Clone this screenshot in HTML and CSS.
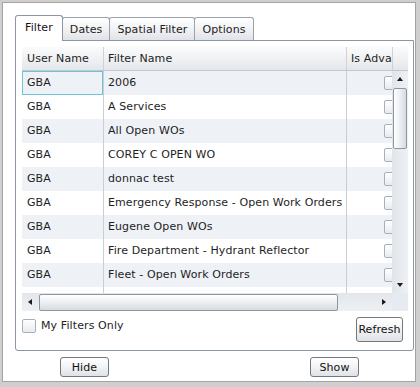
FILE: index.html
```html
<!DOCTYPE html>
<html lang="en">
<head>
    <meta charset="UTF-8">
    <meta name="viewport" content="width=device-width, initial-scale=1.0">
    <title>Filters</title>
    <link rel="stylesheet" href="styles.css">
</head>
<body>
    <div class="window">
        <div class="tab-strip">
            <div class="tab active">Filter</div>
            <div class="tab">Dates</div>
            <div class="tab">Spatial Filter</div>
            <div class="tab">Options</div>
        </div>
        <div class="tab-panel">
            <div class="grid">
                <div class="grid-head">
                    <div class="hcell c-user">User Name</div>
                    <div class="hcell c-name">Filter Name</div>
                    <div class="hcell c-adv">Is Adva</div>
                    <div class="h-spacer"></div>
                </div>
                <div class="grid-body">
                    <div class="rows">
                        <div class="row"><div class="cell c-user current">GBA</div><div class="cell c-name">2006</div><div class="cell c-adv"><span class="box"></span></div></div>
                        <div class="row"><div class="cell c-user">GBA</div><div class="cell c-name">A Services</div><div class="cell c-adv"><span class="box"></span></div></div>
                        <div class="row"><div class="cell c-user">GBA</div><div class="cell c-name">All Open WOs</div><div class="cell c-adv"><span class="box"></span></div></div>
                        <div class="row"><div class="cell c-user">GBA</div><div class="cell c-name">COREY C OPEN WO</div><div class="cell c-adv"><span class="box"></span></div></div>
                        <div class="row"><div class="cell c-user">GBA</div><div class="cell c-name">donnac test</div><div class="cell c-adv"><span class="box"></span></div></div>
                        <div class="row"><div class="cell c-user">GBA</div><div class="cell c-name">Emergency Response - Open Work Orders</div><div class="cell c-adv"><span class="box"></span></div></div>
                        <div class="row"><div class="cell c-user">GBA</div><div class="cell c-name">Eugene Open WOs</div><div class="cell c-adv"><span class="box"></span></div></div>
                        <div class="row"><div class="cell c-user">GBA</div><div class="cell c-name">Fire Department - Hydrant Reflector</div><div class="cell c-adv"><span class="box"></span></div></div>
                        <div class="row"><div class="cell c-user">GBA</div><div class="cell c-name">Fleet - Open Work Orders</div><div class="cell c-adv"><span class="box"></span></div></div>
                        <div class="row"><div class="cell c-user"></div><div class="cell c-name"></div><div class="cell c-adv"></div></div>
                    </div>
                    <div class="vscroll">
                        <div class="sb-btn"><span class="arrow up"></span></div>
                        <div class="v-thumb"></div>
                        <div class="sb-fill"></div>
                        <div class="sb-btn"><span class="arrow down"></span></div>
                    </div>
                </div>
                <div class="grid-foot">
                    <div class="hscroll">
                        <div class="sb-btn"><span class="arrow left"></span></div>
                        <div class="h-thumb"></div>
                        <div class="sb-fill"></div>
                        <div class="sb-btn"><span class="arrow right"></span></div>
                    </div>
                    <div class="corner"></div>
                </div>
            </div>
            <div class="panel-bottom">
                <label class="check"><span class="box"></span>My Filters Only</label>
                <button class="btn refresh-btn">Refresh</button>
            </div>
        </div>
        <div class="actions">
            <button class="btn">Hide</button>
            <button class="btn">Show</button>
        </div>
    </div>
</body>
</html>
```

FILE: styles.css
```css
body {
    margin: 0;
    background-color: #cfcfcf;
    font-family: "DejaVu Sans", Verdana, sans-serif;
    font-size: 11px;
    letter-spacing: 0.1px;
    color: #1e1e1e;
}
.window {
    margin: 2px 0 0 2px;
    width: 414px;
    height: 380px;
    box-sizing: border-box;
    border: 1px solid #a3a3a3;
    background-color: #fff;
    padding: 12px 0 0 12px;
}
.tab-strip {
    display: flex;
    align-items: flex-end;
    height: 25px;
}
.tab {
    height: 22px;
    line-height: 23px;
    padding: 0 7px;
    margin-left: -1px;
    border: 1px solid #9aa3ad;
    border-bottom: none;
    border-radius: 3px 3px 0 0;
    background: linear-gradient(#ffffff, #f1f2f4 50%, #e0e3e7);
    color: #222;
    white-space: nowrap;
}
.tab.active {
    position: relative;
    z-index: 2;
    height: 25px;
    line-height: 24px;
    padding: 0 9px;
    margin-left: 0;
    margin-bottom: -1px;
    border-color: #8c97a5;
    background: #fff;
    color: #1a0c1a;
}
.tab-panel {
    width: 399px;
    height: 311px;
    box-sizing: border-box;
    border: 1px solid #8c97a5;
    border-radius: 0 0 3px 3px;
    padding: 6px 5px 0 6px;
}
.grid {
    width: 386px;
}
.grid-head {
    display: flex;
    height: 23px;
    line-height: 23px;
    border-bottom: 1px solid #c3c8ce;
    background: linear-gradient(#fbfbfc, #e4e7ea);
}
.hcell,
.cell {
    box-sizing: border-box;
    white-space: nowrap;
    overflow: hidden;
    flex-shrink: 0;
}
.c-user {
    width: 82px;
    padding-left: 5px;
    border-right: 1px solid #cfd3d8;
}
.c-name {
    width: 243px;
    padding-left: 4px;
    border-right: 1px solid #cfd3d8;
}
.hcell.c-adv {
    flex: 1;
    padding-left: 4px;
    border-right: 1px solid #cfd3d8;
}
.h-spacer {
    width: 15px;
}
.grid-body {
    display: flex;
    height: 222px;
}
.rows {
    flex: 1;
    overflow: hidden;
}
.row {
    display: flex;
    height: 24px;
    line-height: 24px;
}
.row:nth-child(odd) {
    background-color: #eef1f6;
}
.cell.c-user,
.cell.c-name {
    border-right-color: #c9ced4;
}
.cell.c-adv {
    flex: 1;
    padding-left: 37px;
    padding-top: 5px;
}
.cell.current {
    box-shadow: inset 0 0 0 1px #6fc3d6;
}
.box {
    display: inline-block;
    width: 14px;
    height: 14px;
    box-sizing: border-box;
    border: 1px solid #a7b0ba;
    border-radius: 2px;
    background: linear-gradient(#ffffff, #e8ebef);
    vertical-align: top;
}
.vscroll {
    width: 16px;
    display: flex;
    flex-direction: column;
    background: linear-gradient(to right, #e1e5ea, #eef1f4);
}
.sb-btn {
    width: 16px;
    height: 16px;
    display: flex;
    align-items: center;
    justify-content: center;
    flex-shrink: 0;
}
.sb-fill {
    flex: 1;
}
.v-thumb {
    height: 61px;
    margin: 1px 1px 0 1px;
    box-sizing: border-box;
    border: 1px solid #8d97a2;
    border-radius: 2px;
    background: linear-gradient(to right, #ffffff, #e9ecef 60%, #d6dbe0);
}
.arrow {
    width: 0;
    height: 0;
}
.arrow.up {
    border-left: 3px solid transparent;
    border-right: 3px solid transparent;
    border-bottom: 4px solid #1a1a1a;
}
.arrow.down {
    border-left: 3px solid transparent;
    border-right: 3px solid transparent;
    border-top: 4px solid #1a1a1a;
}
.arrow.left {
    border-top: 3px solid transparent;
    border-bottom: 3px solid transparent;
    border-right: 4px solid #1a1a1a;
}
.arrow.right {
    border-top: 3px solid transparent;
    border-bottom: 3px solid transparent;
    border-left: 4px solid #1a1a1a;
}
.grid-foot {
    display: flex;
    height: 18px;
}
.hscroll {
    flex: 1;
    display: flex;
    align-items: center;
    background: linear-gradient(#e2e6eb, #eef1f4);
}
.hscroll .sb-btn {
    height: 18px;
}
.h-thumb {
    width: 299px;
    height: 17px;
    margin-left: 1px;
    box-sizing: border-box;
    border: 1px solid #8d97a2;
    border-radius: 2px;
    background: linear-gradient(#ffffff, #e9ecef 60%, #d6dbe0);
}
.corner {
    width: 16px;
    background-color: #e6ebf1;
}
.panel-bottom {
    display: flex;
    justify-content: space-between;
    align-items: flex-start;
    margin-top: 6px;
    padding-right: 5px;
}
.check {
    display: flex;
    align-items: center;
    gap: 5px;
    margin-top: 2px;
    line-height: 14px;
}
.btn {
    font-family: inherit;
    font-size: 11px;
    letter-spacing: 0.1px;
    color: #111;
    width: 49px;
    height: 20px;
    padding: 0;
    border: 1px solid #707880;
    border-radius: 3px;
    background: linear-gradient(#ffffff, #f3f4f6 45%, #dfe2e6);
}
.refresh-btn {
    width: 47px;
    height: 25px;
}
.actions {
    display: flex;
    justify-content: space-between;
    margin-top: 6px;
    padding: 0 56px 0 45px;
}
```
